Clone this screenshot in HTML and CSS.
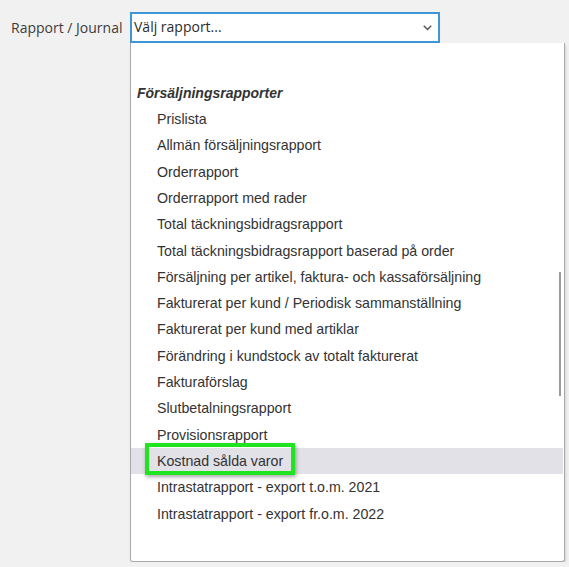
FILE: index.html
```html
<!DOCTYPE html>
<html lang="sv">
<head>
<meta charset="utf-8">
<link rel="stylesheet" href="styles.css">
</head>
<body>
<div class="row">
  <label class="label">Rapport / Journal</label>
  <div class="col">
    <div class="select">
      <span class="select-text">Välj rapport...</span>
      <svg class="chev" width="9" height="6" viewBox="0 0 9 6"><path d="M0.8 0.8 L4.5 4.5 L8.2 0.8" fill="none" stroke="#555" stroke-width="1.5"/></svg>
    </div>
    <div class="panel">
      <div class="list">
        <div class="opt empty"></div>
        <div class="group">Försäljningsrapporter</div>
        <div class="opt">Prislista</div>
        <div class="opt">Allmän försäljningsrapport</div>
        <div class="opt">Orderrapport</div>
        <div class="opt">Orderrapport med rader</div>
        <div class="opt">Total täckningsbidragsrapport</div>
        <div class="opt">Total täckningsbidragsrapport baserad på order</div>
        <div class="opt">Försäljning per artikel, faktura- och kassaförsäljning</div>
        <div class="opt">Fakturerat per kund / Periodisk sammanställning</div>
        <div class="opt">Fakturerat per kund med artiklar</div>
        <div class="opt">Förändring i kundstock av totalt fakturerat</div>
        <div class="opt">Fakturaförslag</div>
        <div class="opt">Slutbetalningsrapport</div>
        <div class="opt">Provisionsrapport</div>
        <div class="opt hl">Kostnad sålda varor<span class="mark"></span></div>
        <div class="opt">Intrastatrapport - export t.o.m. 2021</div>
        <div class="opt">Intrastatrapport - export fr.o.m. 2022</div>
      </div>
      <div class="thumb"></div>
    </div>
  </div>
</div>
</body>
</html>
```
FILE: styles.css
```css
html, body {
  margin: 0;
  padding: 0;
  background: #f1f1f1;
}
body {
  padding-top: 12px;
  font-family: "Open Sans", "Liberation Sans", sans-serif;
}
.row {
  display: flex;
  align-items: flex-start;
}
.label {
  width: 119px;
  padding-left: 11px;
  height: 31px;
  line-height: 31px;
  font-size: 14px;
  color: #3c3c3c;
  white-space: nowrap;
}
.col {
  display: flex;
  flex-direction: column;
  align-items: flex-start;
}
.select {
  box-sizing: border-box;
  width: 310px;
  height: 31px;
  border: 2px solid #3d96d6;
  background: #fff;
  display: flex;
  align-items: center;
  justify-content: space-between;
  padding: 0 6px 0 2px;
}
.select-text {
  font-size: 14px;
  color: #2c2c2c;
  position: relative;
  top: -1px;
}
.chev {
  display: block;
}
.panel {
  position: relative;
  box-sizing: border-box;
  width: 435px;
  height: 519px;
  background: #fff;
  border: 1px solid #a9a9a9;
  border-top: none;
  border-radius: 0 0 3px 3px;
  box-shadow: 1px 2px 3px rgba(0,0,0,0.12);
  font-family: "Liberation Sans", Arial, sans-serif;
  font-size: 14px;
  color: #333;
}
.list {
  padding-top: 10.5px;
}
.opt {
  position: relative;
  height: 26.3px;
  line-height: 26.3px;
  padding-left: 26px;
  white-space: nowrap;
  font-size: 14.2px;
}
.group {
  height: 26.3px;
  line-height: 26.3px;
  padding-left: 6px;
  font-weight: bold;
  font-style: italic;
  color: #333;
}
.hl {
  background: #e1e1e7;
  margin-right: 1px;
}
.mark {
  position: absolute;
  left: 14px;
  top: -5px;
  width: 150px;
  height: 32px;
  box-sizing: border-box;
  border: 4px solid #1fe41f;
  box-shadow: 1px 2px 4px rgba(0,0,0,0.35);
}
.thumb {
  position: absolute;
  right: 3px;
  top: 229px;
  width: 2px;
  height: 124px;
  background: #9a9a9a;
}
```
